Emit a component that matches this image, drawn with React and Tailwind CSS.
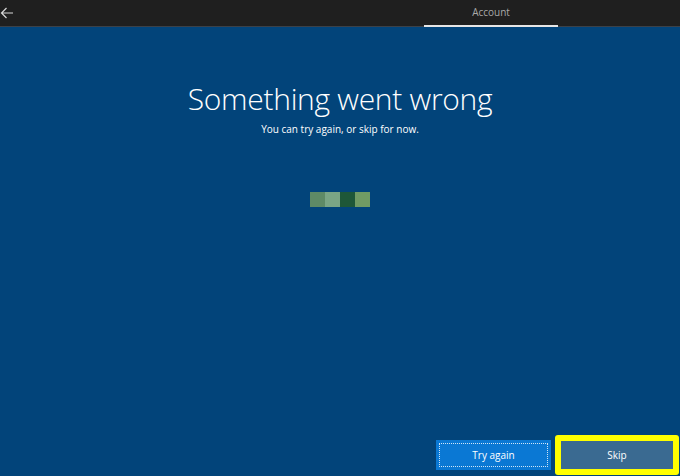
import React from 'react';

const blocks = ['bg-[#5e8a66]', 'bg-[#7aa585]', 'bg-[#1e5738]', 'bg-[#719b64]'];

const App = () => {
    return (
        <div className="w-[680px] h-[476px] flex flex-col bg-[#02447a] overflow-hidden" style={{ fontFamily: '"Open Sans", "Noto Sans", sans-serif' }}>
            {/* top bar */}
            <header className="h-[27px] flex shrink-0 bg-[#1f1f1f] border-b border-[#3b4148]">
                <button className="w-[16px] flex items-center justify-start text-[#d8d8d8]">
                    <svg width="14" height="12" viewBox="0 0 14 12" fill="none" stroke="currentColor" strokeWidth="1.2">
                        <path d="M13 6H1.5M6.5 1L1.5 6l5 5" />
                    </svg>
                </button>
                <div className="ml-[408px] w-[134px] flex items-center justify-center text-[10px] text-[#a9a9a9] border-b-2 border-[#e6e6e6] -mb-px">
                    Account
                </div>
            </header>

            {/* main */}
            <main className="flex-1 flex flex-col items-center pt-[53px]">
                <h1 className="text-[30px] font-light text-white leading-[37px] tracking-[-0.3px]">Something went wrong</h1>
                <p className="mt-[5px] text-[10px] text-white leading-[14px]">You can try again, or skip for now.</p>
                <div className="mt-[56px] flex">
                    {blocks.map((c, i) => (
                        <div key={i} className={`w-[15px] h-[15px] ${c}`} />
                    ))}
                </div>
            </main>

            {/* footer */}
            <footer className="h-[40px] flex items-center justify-end gap-[4px] pr-[1px] mb-[1px]">
                <button className="w-[115px] h-[30px] p-[3px] bg-[#0a78d4] text-white text-[10px]">
                    <span className="w-full h-full flex items-center justify-center border border-dotted border-white/80">Try again</span>
                </button>
                <div className="w-[124px] h-[40px] p-[6px] bg-[#ffff00] rounded-[3px]">
                    <button className="w-full h-full flex items-center justify-center bg-[#3a6a91] text-white text-[10px]">Skip</button>
                </div>
            </footer>
        </div>
    );
};

export default App;
